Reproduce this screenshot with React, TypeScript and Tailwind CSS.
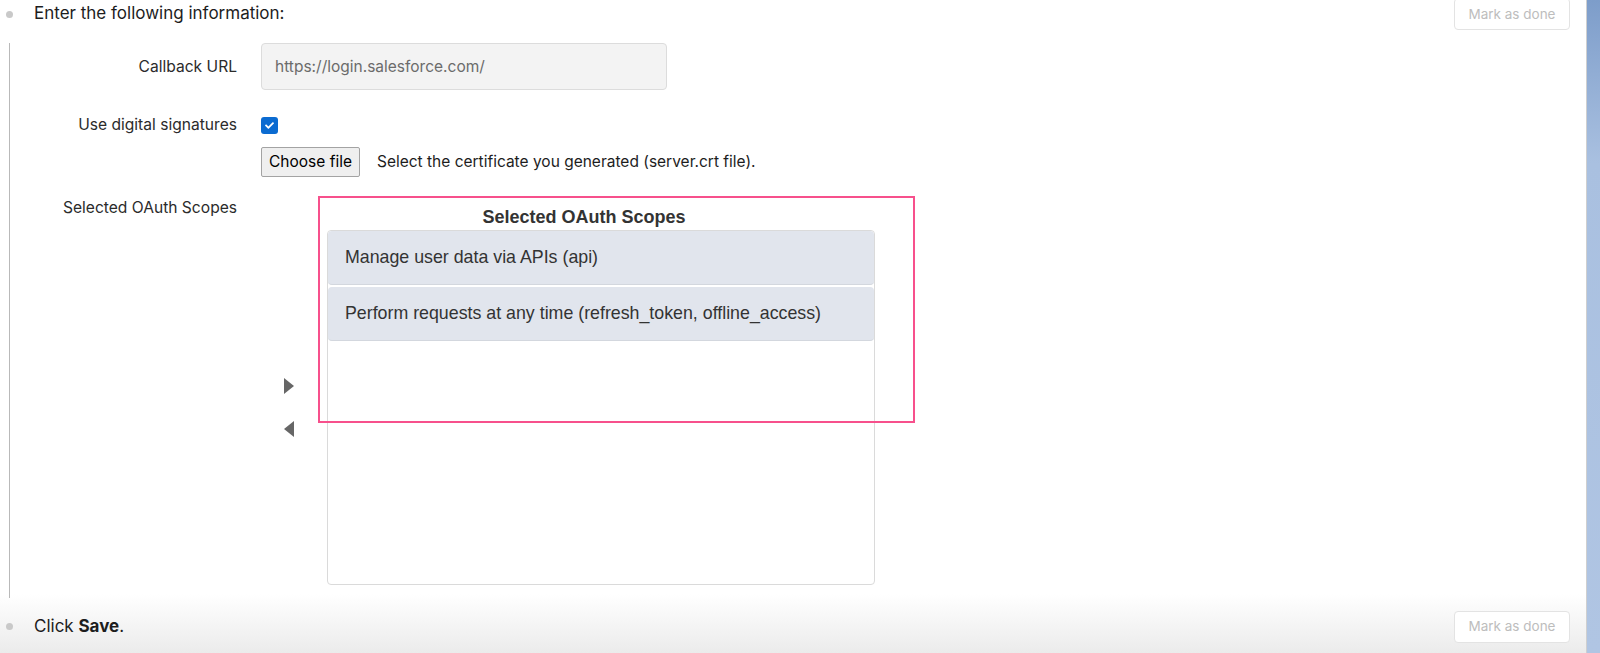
import { FaCheck } from "react-icons/fa";

const scopes = [
  "Manage user data via APIs (api)",
  "Perform requests at any time (refresh_token, offline_access)",
];

function Bullet() {
  return <span className="block w-[7px] h-[7px] rounded-full bg-[#c9c9c9]" />;
}

function MarkDone() {
  return (
    <button className="ml-auto mr-[16px] w-[116px] h-[32px] rounded-[4px] border border-[#e3e3e3] bg-white text-[13.5px] text-[#bdbdbd]">
      Mark as done
    </button>
  );
}

function Label({ children }: { children: React.ReactNode }) {
  return (
    <div className="w-[227px] shrink-0 text-right text-[15.6px] leading-[24px] text-[#2b2b2b]">
      {children}
    </div>
  );
}

export default function App() {
  return (
    <div
      className="flex w-full h-[653px] overflow-hidden text-[#1d1d1d]"
      style={{ fontFamily: "Inter, 'Noto Sans', sans-serif" }}
    >
      <div className="relative w-[1587px] shrink-0 bg-[linear-gradient(to_bottom,#ffffff_91%,#ebebeb)] border-r border-[#cfcfcf]">
        {/* step 1 */}
        <div className="flex items-center h-[32px] mt-[-2px] pl-[6px]">
          <Bullet />
          <span className="ml-[21px] text-[17px]">Enter the following information:</span>
          <MarkDone />
        </div>

        <div className="ml-[9px] mt-[13px] border-l border-[#b9b9b9] pb-[13px]">
          {/* callback url */}
          <div className="flex items-center">
            <Label>Callback URL</Label>
            <div className="ml-[24px] w-[406px] h-[47px] flex items-center px-[13px] rounded-[4px] border border-[#dcdcdc] bg-[#f3f3f3] text-[15.5px] text-[#6b6b6b]">
              https://login.salesforce.com/
            </div>
          </div>

          {/* digital signatures */}
          <div className="flex items-center mt-[23px]">
            <Label>Use digital signatures</Label>
            <span className="ml-[24px] w-[17px] h-[17px] rounded-[3px] bg-[#0b6bd1] flex items-center justify-center">
              <FaCheck className="text-white w-[9px] h-[9px]" />
            </span>
          </div>

          <div className="flex items-center mt-[10px] pl-[251px]">
            <button className="h-[30px] px-[7px] rounded-[2px] border border-[#a3a3a3] bg-[#efefef] text-[15.5px] text-black">
              Choose file
            </button>
            <span className="ml-[17px] text-[15.5px] text-[#1d1d1d]">
              Select the certificate you generated (server.crt file).
            </span>
          </div>

          {/* oauth scopes */}
          <div className="flex items-start mt-[27px]">
            <div className="mt-[-8px]">
              <Label>Selected OAuth Scopes</Label>
            </div>
            <div className="relative ml-[24px] w-[646px]">
              <div
                className="text-center text-[18px] font-bold text-[#333] leading-[26px]"
                style={{ fontFamily: "'Liberation Sans', Arial, sans-serif" }}
              >
                Selected OAuth Scopes
              </div>
              <div className="flex">
                <div className="w-[66px] flex flex-col items-center justify-center gap-[25px] pr-[10px]">
                  <svg width="12" height="18" viewBox="0 0 12 18">
                    <path d="M1 1 L11 9 L1 17 Z" fill="#666" />
                  </svg>
                  <svg width="12" height="18" viewBox="0 0 12 18">
                    <path d="M11 1 L1 9 L11 17 Z" fill="#666" />
                  </svg>
                </div>
                <div
                  className="w-[548px] h-[355px] rounded-[4px] border border-[#dadada] bg-white flex flex-col gap-[2px] text-[17.8px] text-[#333]"
                  style={{ fontFamily: "'Liberation Sans', Arial, sans-serif" }}
                >
                  {scopes.map((s) => (
                    <div
                      key={s}
                      className="h-[54px] flex items-center pl-[17px] rounded-[4px] bg-[#e1e5ed] border-b border-[#d3d7de]"
                    >
                      {s}
                    </div>
                  ))}
                </div>
              </div>
              {/* annotation */}
              <div className="absolute left-[57px] top-[-8px] w-[597px] h-[227px] border-2 border-[#f7508c] pointer-events-none" />
            </div>
          </div>
        </div>

        {/* step 2 */}
        <div className="flex items-center h-[33px] mt-[12px] pl-[6px]">
          <Bullet />
          <span className="ml-[21px] text-[17px]">
            Click <b className="font-bold">Save</b>.
          </span>
          <MarkDone />
        </div>
      </div>
      <div className="flex-1 bg-[linear-gradient(to_bottom,#7d9dca,#a9c0e0_25%,#b0c5e3)]" />
    </div>
  );
}
